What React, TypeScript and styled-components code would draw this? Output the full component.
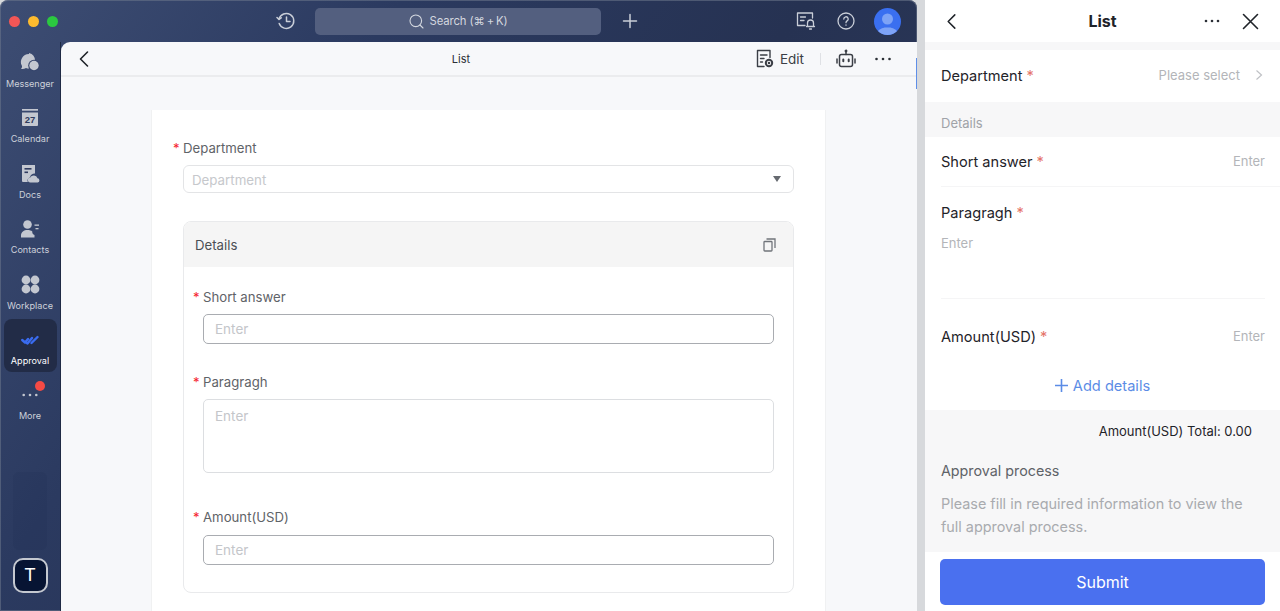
import React from "react";
import styled, { createGlobalStyle } from "styled-components";

const Global = createGlobalStyle`
  html, body { margin: 0; padding: 0; width: 1280px; height: 611px; overflow: hidden; background: #fff; }
  * { box-sizing: border-box; }
  body { font-family: Inter, "Liberation Sans", Arial, sans-serif; }
`;

const Page = styled.div`
  width: 1280px; height: 611px; display: flex; overflow: hidden; background: #d7d9dc;
`;
const Desktop = styled.div`
  width: 917px; height: 611px; display: flex; flex-direction: column; flex: none;
  border-radius: 8px 8px 0 0; overflow: hidden; position: relative;
  background: linear-gradient(125deg, #3d4d73 0%, #2b3a60 30%, #263252 60%, #2e3b5d 100%);
  box-shadow: inset 0 0 0 1px rgba(110,120,140,.55);
`;
const TitleBar = styled.div`
  height: 42px; flex: none; display: flex; align-items: center; position: relative;
`;
const Lights = styled.div`
  display: flex; gap: 8px; margin-left: 9px; width: 267px;
`;
const Light = styled.span<{ $c: string }>`
  width: 11px; height: 11px; border-radius: 50%; background: ${p => p.$c};
`;
const TitleIcon = styled.div`
  display: flex; align-items: center; justify-content: center; color: #c9ced8; flex: none;
`;
const Search = styled.div`
  width: 286px; height: 27px; margin: 0 21px 0 19px; flex: none; border-radius: 5px; background: #535f7f;
  display: flex; align-items: center; justify-content: center; gap: 6px;
  color: #d3d7df; font-size: 11.3px; letter-spacing: -0.1px;
`;
const TitleRight = styled.div`
  display: flex; align-items: center; margin-left: 158px; gap: 21px;
`;
const Avatar = styled.div`
  width: 27px; height: 27px; border-radius: 50%; background: #3a6ff0; overflow: hidden;
  display: flex; align-items: flex-end; justify-content: center; margin-left: -2px;
`;
const Body = styled.div`
  flex: 1; display: flex; min-height: 0;
`;
const Sidebar = styled.nav`
  width: 61px; flex: none; display: flex; flex-direction: column; align-items: center; padding-left: 0;
  border-right: 1px solid #1f2a44; position: relative;
`;
const NavItem = styled.div<{ $active?: boolean }>`
  width: 53px; height: 53px; margin-bottom: 2.4px; border-radius: 8px; flex: none;
  background: ${p => (p.$active ? "#222c47" : "transparent")};
  color: ${p => (p.$active ? "#ffffff" : "#cdd1da")};
  display: flex; flex-direction: column; align-items: center; justify-content: flex-start;
  font-size: 9.1px; padding-top: 9px; position: relative; letter-spacing: 0;
`;
const NavIcon = styled.div`
  height: 24px; display: flex; align-items: center; justify-content: center; margin-bottom: 3px;
`;
const NavStack = styled.div`
  display: flex; flex-direction: column; align-items: center;
`;
const Badge = styled.span`
  position: absolute; top: 7px; right: 12px; width: 10px; height: 10px; border-radius: 50%; background: #f54a45;
`;
const ShortcutTray = styled.div`
  margin-top: auto; margin-bottom: 8px; width: 34px; height: 78px; border-radius: 6px; background: rgba(20,28,50,.07);
  flex: none;
`;
const UserTile = styled.div`
  width: 35px; height: 35px; margin-bottom: 18px; border-radius: 10px; background: #071433;
  border: 2px solid #c4c8d0; color: #fff; display: flex; align-items: center; justify-content: center;
  font-size: 18px; font-family: "Liberation Sans", Arial, sans-serif; flex: none;
`;
const Main = styled.main`
  flex: 1; min-width: 0; display: flex; flex-direction: column; background: #f7f8fa;
  border-radius: 9px 0 0 0; overflow: hidden; position: relative;
  &::after {
    content: ""; position: absolute; right: 0; top: 16px; width: 1.5px; height: 31px; background: #5f8fe8;
  }
`;
const MainHeader = styled.header`
  height: 35px; flex: none; display: flex; align-items: center; position: relative;
  border-bottom: 2px solid #ebecee; padding: 0 25px 0 14px; color: #1f2329;
`;
const HeaderTitle = styled.div`
  position: absolute; left: 0; right: 0; text-align: center; font-size: 11px; color: #2b2f36; pointer-events: none;
  padding-right: 56px;
`;
const HeaderActions = styled.div`
  margin-left: auto; display: flex; align-items: center; font-size: 13.5px; color: #3b3f46;
`;
const EditText = styled.span`
  margin: 0 16px 0 6px;
`;
const VRule = styled.span`
  width: 1px; height: 12px; background: #dfe1e5; margin-right: 15px;
`;
const RobotGap = styled.span`
  width: 18px;
`;
const Canvas = styled.div`
  flex: 1; padding: 33px 91px 0 90px; min-height: 0;
`;
const Card = styled.div`
  width: 675px; height: 100%; background: #fff; border-left: 1px solid #f0f1f2; border-right: 1px solid #f0f1f2;
  padding: 30px 31px 0 21px;
`;
const Label = styled.div`
  font-size: 13.2px; line-height: 16px; color: #5f6368; display: flex; align-items: center;
  letter-spacing: 0; height: 16px;
`;
const Star = styled.span`
  width: 10px; color: #f5222d; font-size: 13px; flex: none; margin-right: 0;
`;
const Select = styled.div`
  margin: 9px 0 28px 10px; height: 28px; border: 1px solid #e3e4e6; border-radius: 6px; display: flex;
  align-items: center; justify-content: space-between; padding: 2px 12px 0 8px;
  font-size: 13.3px; color: #c6c8cc;
`;
const Caret = styled.span`
  width: 0; height: 0; border-left: 4.5px solid transparent; border-right: 4.5px solid transparent;
  border-top: 6px solid #666a70; margin-top: -2px;
`;
const DetailBox = styled.section`
  margin-left: 10px; height: 372px; border: 1px solid #e9eaec; border-radius: 8px; overflow: hidden;
`;
const DetailHeader = styled.div`
  height: 45px; background: #f5f5f5; display: flex; align-items: center; justify-content: space-between;
  padding: 0 17px 0 11px; font-size: 13.2px; color: #4a4e54;
`;
const DetailBody = styled.div`
  padding: 22px 19px 0 9px; display: flex; flex-direction: column;
`;
const Input = styled.div<{ $dark?: boolean; $h: number; $top: number; $mb: number }>`
  margin: ${p => p.$top}px 0 ${p => p.$mb}px 10px; height: ${p => p.$h}px; border-radius: 5px;
  border: 1px solid ${p => (p.$dark ? "#a9acb1" : "#dcdee1")};
  font-size: 13.5px; color: #c4c6ca; padding: ${p => (p.$h > 40 ? "8px 11px" : "0 11px")};
  display: flex; align-items: ${p => (p.$h > 40 ? "flex-start" : "center")};
`;
const Gap = styled.div`
  width: 8px; height: 611px; flex: none; background: #d7d9dc;
`;
const Panel = styled.aside`
  width: 355px; height: 611px; flex: none; background: #fff; display: flex; flex-direction: column;
  color: #1f2329;
`;
const PanelHeader = styled.div`
  height: 42px; flex: none; display: flex; align-items: center; position: relative; padding: 0 21px 0 18px;
  justify-content: space-between;
`;
const PanelTitle = styled.div`
  position: absolute; left: 0; right: 0; text-align: center; font-size: 16px; font-weight: 700; color: #1f2329;
`;
const PanelTools = styled.div`
  display: flex; align-items: center; gap: 21px;
`;
const Band = styled.div<{ $h: number }>`
  height: ${p => p.$h}px; flex: none; background: #f7f7f8; display: flex; align-items: flex-end;
  padding: 0 16px 6px; font-size: 13px; color: #a0a3a8;
`;
const Row = styled.div<{ $h: number; $line?: boolean; $nudge?: number }>`
  height: ${p => p.$h}px; flex: none; margin-left: 16px; padding: 0 15px ${p => p.$nudge ?? 0}px 0;
  display: flex; align-items: center; justify-content: space-between;
  border-bottom: ${p => (p.$line ? "1px solid #f5f5f6" : "none")};
  font-size: 14.6px;
`;
const RowLabel = styled.span`
  color: #1f2329;
`;
const Req = styled.span`
  color: #e5756b; margin-left: 4px;
`;
const Hint = styled.span`
  color: #b3b5b9; font-size: 13px; display: flex; align-items: center; gap: 13px; margin-top: -1px;
`;
const Para = styled.div`
  height: 112px; flex: none; margin: 0 15px 13px 16px; padding-top: 17px;
  border-bottom: 1px solid #f5f5f6; font-size: 14.6px;
`;
const ParaHint = styled.div`
  margin-top: 13px; font-size: 13px; color: #b3b5b9;
`;
const AddRow = styled.div`
  height: 49px; flex: none; margin-top: 0; display: flex; align-items: center; justify-content: center; gap: 5px;
  color: #5b8ce6; font-size: 14.6px;
`;
const Gray = styled.div`
  flex: 1; background: #f7f7f8; padding: 13px 16px 0; min-height: 0;
`;
const Total = styled.div`
  text-align: right; font-size: 13px; line-height: 16px; color: #1f2329; padding-right: 12px;
`;
const ProcessTitle = styled.div`
  margin-top: 23px; font-size: 14.3px; line-height: 18px; color: #5f6368;
`;
const ProcessText = styled.div`
  margin-top: 12px; font-size: 14.4px; line-height: 23px; color: #a9abaf; width: 320px;
`;
const Footer = styled.div`
  height: 59px; flex: none; padding: 7px 15px 6px; background: #fff;
`;
const Submit = styled.button`
  width: 100%; height: 46px; border: 0; border-radius: 5px; background: #4a70ef; color: #fff;
  font: inherit; font-size: 16px; padding: 0;
`;

const Stroke = { fill: "none", stroke: "currentColor", strokeLinecap: "round" as const, strokeLinejoin: "round" as const };

const Chevron = ({ size = 18, w = 1.6 }: { size?: number; w?: number }) => (
  <svg width={size} height={size} viewBox="0 0 18 18" {...Stroke} strokeWidth={w}><path d="M12.5 2 5.5 9l7 7" /></svg>
);

const Dots = ({ gap = 6, color = "#2b2f36" }: { gap?: number; color?: string }) => (
  <svg width="18" height="6" viewBox="0 0 18 6" fill={color}>
    <circle cx={9 - gap} cy="3" r="1.3" /><circle cx="9" cy="3" r="1.3" /><circle cx={9 + gap} cy="3" r="1.3" />
  </svg>
);

const icons: Record<string, React.ReactNode> = {
  Messenger: (
    <svg width="20" height="20" viewBox="0 0 20 20" fill="#c3c7d0">
      <path d="M9 1a8 8 0 0 0-7 12c.2 1-.2 2-1 3 2 .3 3.500 0 5-1a8 8 0 0 0 3 .5 8 8 0 0 0 0-15.500Z" />
      <circle cx="14" cy="12.500" r="5.800" fill="#35446b" />
      <circle cx="14" cy="12.500" r="4.700" />
    </svg>
  ),
  Calendar: (
    <svg width="18" height="20" viewBox="0 0 18 20">
      <rect x="1" y="1" width="16" height="1.700" fill="#c3c7d0" />
      <path d="M1 4.500h16v12.500a1 1 0 0 1-1 1H2a1 1 0 0 1-1-1Z" fill="#c3c7d0" />
      <text x="9" y="15" textAnchor="middle" fontSize="9.500" fontWeight="700" fill="#2f3b5e" fontFamily="Liberation Sans, Arial, sans-serif">27</text>
    </svg>
  ),
  Docs: (
    <svg width="20" height="20" viewBox="0 0 20 20" fill="#c3c7d0">
      <path d="M2 1h13v8.500a5 5 0 0 0-5 3.700A3.500 3.500 0 0 0 7.800 18H3a1 1 0 0 1-1-1Z" />
      <rect x="4.500" y="4" width="7" height="1.600" fill="#303c60" />
      <rect x="4.500" y="7.500" width="3.500" height="1.600" fill="#303c60" />
      <path d="M10.500 18.500a2.500 2.500 0 0 1-.3-5 4 4 0 0 1 7.300.7 2.200 2.200 0 0 1 .3 4.300Z" />
    </svg>
  ),
  Contacts: (
    <svg width="20" height="20" viewBox="0 0 20 20" fill="#c3c7d0">
      <circle cx="7.500" cy="5.500" r="4.300" />
      <path d="M1 18.500v-2c0-3.500 3-5.500 6.500-5.500 2 0 3.700.5 4.800 1.500-.3 2 .8 3 2.200 3.500v2.500Z" />
      <rect x="14.500" y="5.500" width="4.500" height="1.300" /><rect x="15.500" y="9" width="3" height="1.300" />
    </svg>
  ),
  Workplace: (
    <svg width="19" height="19" viewBox="0 0 19 19" fill="#c3c7d0">
      <circle cx="5" cy="5" r="4.400" /><circle cx="14" cy="5" r="4.400" />
      <circle cx="5" cy="14" r="4.400" /><circle cx="14" cy="14" r="4.400" />
    </svg>
  ),
  Approval: (
    <svg width="18" height="10" viewBox="0 0 18 10" {...Stroke} stroke="#3a6cf0" strokeWidth="2.400">
      <path d="M1.200 5 4 7.500 7 4" /><path d="M5 7.500 6.500 8.500 11 3" /><path d="M10.500 8 16.500 2" />
    </svg>
  ),
  More: <Dots gap={6.300} color="#c3c7d0" />,
};

const items = ["Messenger", "Calendar", "Docs", "Contacts", "Workplace", "Approval", "More"];

export default function App() {
  return (
    <Page>
      <Global />
      <Desktop>
        <TitleBar>
          <Lights>
            <Light $c="#f25656" /><Light $c="#fdbb2e" /><Light $c="#2bc840" />
          </Lights>
          <TitleIcon>
            <svg width="20" height="20" viewBox="0 0 20 20" {...Stroke} strokeWidth="1.500">
              <path d="M3.200 12.500A7.500 7.500 0 1 0 3 8" /><path d="M1 6.500 3 8.500 5.200 6.800" /><path d="M10.500 6v4.500h3.500" />
            </svg>
          </TitleIcon>
          <Search>
            <svg width="15" height="15" viewBox="0 0 15 15" {...Stroke} strokeWidth="1.100">
              <circle cx="6.800" cy="6.800" r="5.800" /><path d="m11 11 3 3" />
            </svg>
            <span>Search (⌘{"\u2009"}+{"\u2009"}K)</span>
          </Search>
          <TitleIcon>
            <svg width="16" height="16" viewBox="0 0 16 16" {...Stroke} strokeWidth="1.500"><path d="M8 1.500v13M1.500 8h13" /></svg>
          </TitleIcon>
          <TitleRight>
            <TitleIcon>
              <svg width="20" height="20" viewBox="0 0 20 20" {...Stroke} strokeWidth="1.300">
                <path d="M9 14.500H1.500V2h15v5" /><path d="M4.500 6h5M4.500 9.500h3.500" />
                <path d="M11.500 15.500v-3.500a3 3 0 0 1 6 0v3.500M10.500 15.500h8M13.500 18h2" />
              </svg>
            </TitleIcon>
            <TitleIcon>
              <svg width="18" height="18" viewBox="0 0 18 18" {...Stroke} strokeWidth="1.300">
                <circle cx="9" cy="9" r="8" /><path d="M6.800 7a2.200 2.200 0 1 1 3.300 1.900c-.8.500-1.100 1-1.100 1.800" /><path d="M9 13v.2" />
              </svg>
            </TitleIcon>
            <Avatar>
              <svg width="23" height="24" viewBox="0 0 23 24" fill="#7ea3f6">
                <circle cx="11.500" cy="8" r="5.500" /><path d="M1.500 24v-2c0-3 3.500-4.500 7-5.500h6c3.500 1 7 2.500 7 5.500v2Z" />
              </svg>
            </Avatar>
          </TitleRight>
        </TitleBar>
        <Body>
          <Sidebar>
            <NavStack>
              {items.map(name => (
                <NavItem key={name} $active={name === "Approval"}>
                  <NavIcon>{icons[name]}</NavIcon>
                  {name}
                  {name === "More" && <Badge />}
                </NavItem>
              ))}
            </NavStack>
            <ShortcutTray />
            <UserTile>T</UserTile>
          </Sidebar>
          <Main>
            <MainHeader>
              <Chevron />
              <HeaderTitle>List</HeaderTitle>
              <HeaderActions>
                <svg width="18" height="19" viewBox="0 0 18 19" {...Stroke} strokeWidth="1.400">
                  <path d="M8 17.500H1.500V1.500h12.500v7" /><path d="M4.500 6h6.500M4.500 9.500h3.500M4.500 13h2" />
                  <circle cx="13" cy="14" r="3.200" strokeWidth="2" /><circle cx="13" cy="14" r=".6" />
                </svg>
                <EditText>Edit</EditText>
                <VRule />
                <svg width="20" height="20" viewBox="0 0 20 20" {...Stroke} strokeWidth="1.500">
                  <rect x="3.500" y="5.500" width="13" height="12" rx="2" />
                  <path d="M10 5.500V2.500M1 10v4M19 10v4" /><circle cx="10" cy="2" r=".7" />
                  <path d="M7.300 10.500v1.800M12.700 10.500v1.800" strokeWidth="2" />
                </svg>
                <RobotGap />
                <Dots gap={6.500} />
              </HeaderActions>
            </MainHeader>
            <Canvas>
              <Card>
                <Label><Star>*</Star>Department</Label>
                <Select>Department<Caret /></Select>
                <DetailBox>
                  <DetailHeader>
                    Details
                    <svg width="13" height="15" viewBox="0 0 13 15" fill="none" stroke="#70747a" strokeWidth="1.300">
                      <rect x="1" y="4.500" width="8" height="9.500" rx=".8" /><path d="M3.500 2h8.500v9" />
                    </svg>
                  </DetailHeader>
                  <DetailBody>
                    <Label><Star>*</Star>Short answer</Label>
                    <Input $dark $h={30} $top={9} $mb={30}>Enter</Input>
                    <Label><Star>*</Star>Paragragh</Label>
                    <Input $h={74} $top={9} $mb={36}>Enter</Input>
                    <Label><Star>*</Star>Amount(USD)</Label>
                    <Input $dark $h={30} $top={10} $mb={0}>Enter</Input>
                  </DetailBody>
                </DetailBox>
              </Card>
            </Canvas>
          </Main>
        </Body>
      </Desktop>
      <Gap />
      <Panel>
        <PanelHeader>
          <Chevron size={17} />
          <PanelTitle>List</PanelTitle>
          <PanelTools>
            <Dots gap={6} />
            <svg width="17" height="17" viewBox="0 0 17 17" {...Stroke} strokeWidth="1.600"><path d="M1.500 1.500l14 14M15.500 1.500l-14 14" /></svg>
          </PanelTools>
        </PanelHeader>
        <Band $h={8} />
        <Row $h={52} $nudge={1}>
          <RowLabel>Department<Req>*</Req></RowLabel>
          <Hint>
            Please select
            <svg width="12" height="12" viewBox="0 0 12 12" fill="none" stroke="#bfc1c5" strokeWidth="1.200"><path d="m3.500 1.500 5 4.500-5 4.500" /></svg>
          </Hint>
        </Row>
        <Band $h={35}>Details</Band>
        <Row $h={50} $line>
          <RowLabel>Short answer<Req>*</Req></RowLabel>
          <Hint>Enter</Hint>
        </Row>
        <Para>
          <RowLabel>Paragragh<Req>*</Req></RowLabel>
          <ParaHint>Enter</ParaHint>
        </Para>
        <Row $h={49}>
          <RowLabel>Amount(USD)<Req>*</Req></RowLabel>
          <Hint>Enter</Hint>
        </Row>
        <AddRow>
          <svg width="13" height="13" viewBox="0 0 13 13" fill="none" stroke="currentColor" strokeWidth="1.600"><path d="M6.500 0v13M0 6.500h13" /></svg>
          Add details
        </AddRow>
        <Gray>
          <Total>Amount(USD) Total: 0.00</Total>
          <ProcessTitle>Approval process</ProcessTitle>
          <ProcessText>Please fill in required information to view the full approval process.</ProcessText>
        </Gray>
        <Footer><Submit>Submit</Submit></Footer>
      </Panel>
    </Page>
  );
}
